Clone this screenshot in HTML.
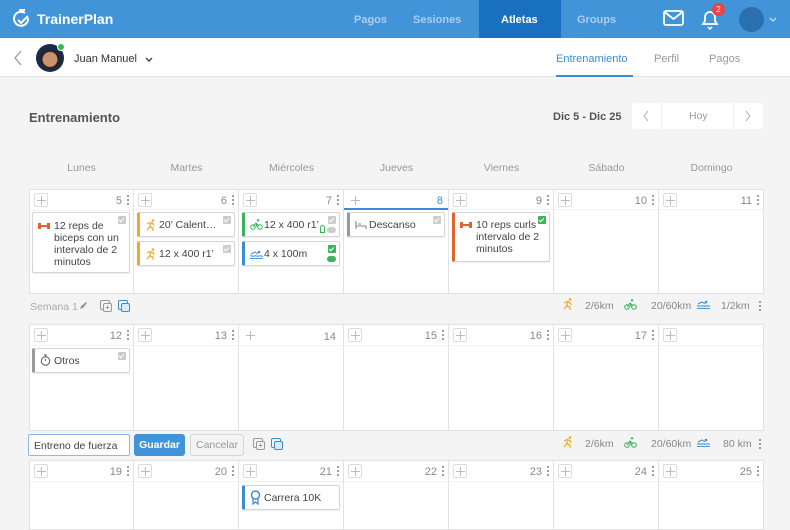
<!DOCTYPE html>
<html><head><meta charset="utf-8">
<style>
*{box-sizing:border-box;margin:0;padding:0}
body{width:790px;height:528px;overflow:hidden;background:#f4f4f4;font-family:"Liberation Sans",sans-serif;position:relative;color:#444}
.a{position:absolute}
.nav{left:0;top:0;width:790px;height:38px;background:#4294d8}
.nt{top:14px;font-size:11px;font-weight:bold;color:#a9cdef}
.cell{position:absolute;background:#fff;border-right:1px solid #e2e2e2;border-bottom:1px solid #e2e2e2}
.plus{position:absolute;left:4px;top:3px;width:14px;height:14px;border:1px solid #ddd;border-radius:2px}
.plus:before{content:"";position:absolute;left:6px;top:2px;width:1px;height:9px;background:#bbb}
.plus:after{content:"";position:absolute;left:2px;top:6px;width:9px;height:1px;background:#bbb}
.num{position:absolute;right:11px;top:5px;font-size:11px;color:#888}
.keb{position:absolute;right:4px;top:4px;width:2px;height:11px;background:radial-gradient(circle,#888 0.9px,transparent 1.1px) 0 0/2px 4px repeat-y}
.hl{position:absolute;left:0;right:0;top:20px;height:1px;background:#f0f0f0}
.card{position:absolute;background:#fff;border:1px solid #d6d6d6;border-radius:2px;box-shadow:0 1px 1px rgba(0,0,0,.08);font-size:10.5px;color:#444;line-height:12px}
.card .t{position:absolute;left:21px;top:6px}
.chk{position:absolute;right:3px;top:3px;width:8px;height:8px;background:#ccc;border-radius:1px}
.chk.g{background:#3cb35a}
.chk:after{content:"";position:absolute;left:2px;top:1px;width:2px;height:4px;border:solid #fff;border-width:0 1px 1px 0;transform:rotate(45deg)}
.ic{position:absolute;left:5px;top:6px}
.day{top:162px;font-size:10.5px;color:#999;width:105px;text-align:center}
.sum{font-size:10.5px;color:#888}
</style></head><body>
<div class="a nav"></div>
<svg class="a" style="left:12px;top:8px" width="20" height="22" viewBox="0 0 20 22"><path d="M7 2h6M10 2v3" stroke="#fff" stroke-width="2" fill="none"/><path d="M16 10a7 7 0 1 1-3-5" stroke="#fff" stroke-width="2" fill="none"/><path d="M6 12l3 3 7-7" stroke="#fff" stroke-width="2" fill="none"/></svg>
<div class="a" style="left:37px;top:11px;font-size:14px;font-weight:bold;color:#fff">TrainerPlan</div>
<div class="a nt" style="left:354px">Pagos</div>
<div class="a nt" style="left:413px">Sesiones</div>
<div class="a" style="left:479px;top:0;width:82px;height:38px;background:#1a70c0"></div>
<div class="a nt" style="left:501px;color:#fff">Atletas</div>
<div class="a nt" style="left:577px">Groups</div>
<svg class="a" style="left:663px;top:10px" width="21" height="16" viewBox="0 0 21 16"><rect x="1" y="1" width="19" height="14" rx="2" stroke="#fff" stroke-width="1.8" fill="none"/><path d="M1.5 2l9 7 9-7" stroke="#fff" stroke-width="1.8" fill="none"/></svg>
<svg class="a" style="left:700px;top:8px" width="20" height="22" viewBox="0 0 20 22"><path d="M3 16h14l-2-3V9a5 5 0 0 0-10 0v4z" stroke="#fff" stroke-width="1.8" fill="none"/><path d="M8 19l2 2 2-2" stroke="#fff" stroke-width="1.5" fill="none"/></svg>
<div class="a" style="left:712px;top:3px;width:13px;height:13px;border-radius:50%;background:#e84545;color:#fff;font-size:8px;text-align:center;line-height:13px">2</div>
<div class="a" style="left:739px;top:7px;width:25px;height:25px;border-radius:50%;background:#2a6fae"></div>
<svg class="a" style="left:769px;top:17px" width="8" height="5"><path d="M1 1l3 3 3-3" stroke="#cde" stroke-width="1.3" fill="none"/></svg>

<div class="a" style="left:0;top:38px;width:790px;height:39px;background:#fff;border-bottom:1px solid #e4e4e4"></div>
<svg class="a" style="left:13px;top:50px" width="10" height="16"><path d="M8 1L2 8l6 7" stroke="#999" stroke-width="1.3" fill="none"/></svg>
<div class="a" style="left:36px;top:44px;width:28px;height:28px;border-radius:50%;background:radial-gradient(circle at 50% 55%,#c8936e 0 7px,#2b1f1a 8px,#1a2a4a 11px)"></div>
<div class="a" style="left:57px;top:43px;width:8px;height:8px;border-radius:50%;background:#2ec04a;border:1px solid #fff"></div>
<div class="a" style="left:74px;top:53px;font-size:11px;color:#333">Juan Manuel</div>
<svg class="a" style="left:145px;top:57px" width="8" height="5"><path d="M1 1l3 3 3-3" stroke="#444" stroke-width="1.4" fill="none"/></svg>
<div class="a" style="left:556px;top:53px;font-size:11px;color:#3a8cd6">Entrenamiento</div>
<div class="a" style="left:556px;top:75px;width:77px;height:2px;background:#3a8cd6"></div>
<div class="a" style="left:654px;top:53px;font-size:11px;color:#999">Perfil</div>
<div class="a" style="left:709px;top:53px;font-size:11px;color:#999">Pagos</div>

<div class="a" style="left:29px;top:110px;font-size:13px;font-weight:bold;color:#555">Entrenamiento</div>
<div class="a" style="left:553px;top:111px;font-size:11px;font-weight:bold;color:#555">Dic 5 - Dic 25</div>
<div class="a" style="left:632px;top:103px;width:131px;height:26px;background:#fff;border-radius:3px"></div>
<div class="a" style="left:661px;top:103px;width:1px;height:26px;background:#eee"></div>
<div class="a" style="left:733px;top:103px;width:1px;height:26px;background:#eee"></div>
<svg class="a" style="left:642px;top:110px" width="8" height="12"><path d="M6 1L2 6l4 5" stroke="#bbb" stroke-width="1.2" fill="none"/></svg>
<svg class="a" style="left:744px;top:110px" width="8" height="12"><path d="M2 1l4 5-4 5" stroke="#bbb" stroke-width="1.2" fill="none"/></svg>
<div class="a" style="left:689px;top:110px;font-size:10.5px;color:#999">Hoy</div>

<div class="a day" style="left:29px">Lunes</div>
<div class="a day" style="left:134px">Martes</div>
<div class="a day" style="left:239px">Miércoles</div>
<div class="a day" style="left:344px">Jueves</div>
<div class="a day" style="left:449px">Viernes</div>
<div class="a day" style="left:554px">Sábado</div>
<div class="a day" style="left:659px">Domingo</div>

<!-- week 1 -->
<div class="a" style="left:29px;top:189px;width:735px;height:105px;border-left:1px solid #e2e2e2;border-top:1px solid #e2e2e2"></div>
<div class="cell" style="left:29px;top:189px;width:105px;height:105px;border-left:1px solid #e2e2e2;border-top:1px solid #e2e2e2"><div class="plus"></div><div class="num">5</div><div class="keb"></div><div class="hl"></div></div>
<div class="cell" style="left:134px;top:190px;width:105px;height:104px"><div class="plus"></div><div class="num">6</div><div class="keb"></div><div class="hl" style="top:19px"></div></div>
<div class="cell" style="left:239px;top:190px;width:105px;height:104px"><div class="plus"></div><div class="num">7</div><div class="keb"></div><div class="hl" style="top:19px"></div></div>
<div class="cell" style="left:344px;top:190px;width:105px;height:104px"><div class="plus" style="border-color:transparent"></div><div class="num" style="right:5px;color:#3a8cd6">8</div><div class="hl" style="top:18px;height:2px;background:#3a8cd6"></div></div>
<div class="cell" style="left:449px;top:190px;width:105px;height:104px"><div class="plus"></div><div class="num">9</div><div class="keb"></div><div class="hl" style="top:19px"></div></div>
<div class="cell" style="left:554px;top:190px;width:105px;height:104px"><div class="plus"></div><div class="num">10</div><div class="keb"></div><div class="hl" style="top:19px"></div></div>
<div class="cell" style="left:659px;top:190px;width:105px;height:104px"><div class="plus"></div><div class="num">11</div><div class="keb"></div><div class="hl" style="top:19px"></div></div>

<div class="card" style="left:32px;top:212px;width:98px;height:61px"><svg class="ic" style="top:9px" width="12" height="8"><rect x="0" y="1" width="3" height="6" fill="#e0642c"/><rect x="9" y="1" width="3" height="6" fill="#e0642c"/><rect x="3" y="3" width="6" height="2" fill="#e0642c"/></svg><div class="t" style="top:7px">12 reps de<br>biceps con un<br>intervalo de 2<br>minutos</div><div class="chk"></div></div>

<div class="card" style="left:137px;top:212px;width:98px;height:25px;border-left:3px solid #f0a830"><svg class="ic" width="12" height="12" viewBox="0 0 12 12"><circle cx="8" cy="1.5" r="1.3" fill="#f0a830"/><path d="M2 5l3-1.5 3 1 1 2.5M6 4l-1.5 4L2 11M5 8l3 1 0 3" stroke="#f0a830" stroke-width="1.2" fill="none"/></svg><div class="t" style="left:19px">20’ Calent…</div><div class="chk"></div></div>
<div class="card" style="left:137px;top:241px;width:98px;height:25px;border-left:3px solid #f0a830"><svg class="ic" width="12" height="12" viewBox="0 0 12 12"><circle cx="8" cy="1.5" r="1.3" fill="#f0a830"/><path d="M2 5l3-1.5 3 1 1 2.5M6 4l-1.5 4L2 11M5 8l3 1 0 3" stroke="#f0a830" stroke-width="1.2" fill="none"/></svg><div class="t" style="left:19px">12 x 400 r1’</div><div class="chk"></div></div>

<div class="card" style="left:242px;top:212px;width:98px;height:25px;border-left:3px solid #3cb35a"><svg class="ic" width="13" height="11" viewBox="0 0 13 11"><circle cx="3" cy="8" r="2.3" stroke="#3cb35a" fill="none"/><circle cx="10" cy="8" r="2.3" stroke="#3cb35a" fill="none"/><circle cx="8" cy="1.3" r="1.2" fill="#3cb35a"/><path d="M3 8l3-4 2 2h2M6 4l1 4" stroke="#3cb35a" fill="none"/></svg><div class="t" style="left:19px">12 x 400 r1’</div><div class="chk"></div><div class="a" style="right:3px;top:14px;width:9px;height:6px;border-radius:4px;background:#ccc"></div><div class="a" style="right:14px;top:12px;width:5px;height:8px;border:1.5px solid #3cb35a;border-radius:3px 3px 0 0"></div></div>
<div class="card" style="left:242px;top:241px;width:98px;height:25px;border-left:3px solid #3a8cd6"><svg class="ic" style="top:8px" width="13" height="9" viewBox="0 0 13 9"><circle cx="9" cy="2" r="1.3" fill="#3a8cd6"/><path d="M1 4l4-2 3 2M0 6c2-1 3 1 4.5 0s3 1 4.5 0 3 1 4 0M0 8.5c2-1 3 1 4.5 0s3 1 4.5 0 3 1 4 0" stroke="#3a8cd6" fill="none"/></svg><div class="t" style="left:19px">4 x 100m</div><div class="chk g"></div><div class="a" style="right:3px;top:14px;width:9px;height:6px;border-radius:4px;background:#3cb35a"></div></div>

<div class="card" style="left:347px;top:212px;width:98px;height:25px;border-left:3px solid #999"><svg class="ic" style="top:7px" width="12" height="10"><path d="M1 1v8M1 6h10v3M3 4h3" stroke="#888" stroke-width="1.1" fill="none"/></svg><div class="t" style="left:19px">Descanso</div><div class="chk"></div></div>

<div class="card" style="left:452px;top:212px;width:98px;height:50px;border-left:3px solid #e0642c"><svg class="ic" style="top:8px" width="12" height="8"><rect x="0" y="1" width="3" height="6" fill="#e0642c"/><rect x="9" y="1" width="3" height="6" fill="#e0642c"/><rect x="3" y="3" width="6" height="2" fill="#e0642c"/></svg><div class="t">10 reps curls<br>intervalo de 2<br>minutos</div><div class="chk g"></div></div>

<!-- bar 1 -->
<div class="a sum" style="left:30px;top:301px;color:#aaa">Semana 1</div>
<svg class="a" style="left:79px;top:301px" width="9" height="9"><path d="M1 8l1-3 5-4 1 1-4 5z" fill="#999"/></svg>
<div class="a" style="left:100px;top:300px;width:10px;height:10px;border:1px solid #999;border-radius:2px"></div><div class="a" style="left:103px;top:303px;width:9px;height:9px;border:1px solid #999;background:#f4f4f4;border-radius:2px;font-size:8px;line-height:7px;text-align:center;color:#777">+</div>
<div class="a" style="left:118px;top:300px;width:10px;height:10px;border:1px solid #3a8cd6;border-radius:2px"></div><div class="a" style="left:121px;top:303px;width:9px;height:9px;border:1.5px solid #3a8cd6;background:#dcebfa;border-radius:2px"></div>
<svg class="a" style="left:562px;top:298px" width="12" height="12" viewBox="0 0 12 12"><circle cx="8" cy="1.5" r="1.3" fill="#f0a830"/><path d="M2 5l3-1.5 3 1 1 2.5M6 4l-1.5 4L2 11M5 8l3 1 0 3" stroke="#f0a830" stroke-width="1.2" fill="none"/></svg>
<div class="a sum" style="left:585px;top:300px">2/6km</div>
<svg class="a" style="left:624px;top:299px" width="13" height="11" viewBox="0 0 13 11"><circle cx="3" cy="8" r="2.3" stroke="#3cb35a" fill="none"/><circle cx="10" cy="8" r="2.3" stroke="#3cb35a" fill="none"/><circle cx="8" cy="1.3" r="1.2" fill="#3cb35a"/><path d="M3 8l3-4 2 2h2M6 4l1 4" stroke="#3cb35a" fill="none"/></svg>
<div class="a sum" style="left:651px;top:300px">20/60km</div>
<svg class="a" style="left:697px;top:300px" width="13" height="9" viewBox="0 0 13 9"><circle cx="9" cy="2" r="1.3" fill="#3a8cd6"/><path d="M1 4l4-2 3 2M0 6c2-1 3 1 4.5 0s3 1 4.5 0 3 1 4 0M0 8.5c2-1 3 1 4.5 0s3 1 4.5 0 3 1 4 0" stroke="#3a8cd6" fill="none"/></svg>
<div class="a sum" style="left:721px;top:300px">1/2km</div>
<div class="a keb" style="left:759px;top:300px;position:absolute"></div>

<!-- week 2 -->
<div class="cell" style="left:29px;top:324px;width:105px;height:107px;border-left:1px solid #e2e2e2;border-top:1px solid #e2e2e2"><div class="plus"></div><div class="num">12</div><div class="keb"></div><div class="hl"></div></div>
<div class="cell" style="left:134px;top:324px;width:105px;height:107px;border-top:1px solid #e2e2e2"><div class="plus"></div><div class="num">13</div><div class="keb"></div><div class="hl"></div></div>
<div class="cell" style="left:239px;top:324px;width:105px;height:107px;border-top:1px solid #e2e2e2"><div class="plus" style="border-color:transparent"></div><div class="num" style="right:7px;top:6px">14</div><div class="hl"></div></div>
<div class="cell" style="left:344px;top:324px;width:105px;height:107px;border-top:1px solid #e2e2e2"><div class="plus"></div><div class="num">15</div><div class="keb"></div><div class="hl"></div></div>
<div class="cell" style="left:449px;top:324px;width:105px;height:107px;border-top:1px solid #e2e2e2"><div class="plus"></div><div class="num">16</div><div class="keb"></div><div class="hl"></div></div>
<div class="cell" style="left:554px;top:324px;width:105px;height:107px;border-top:1px solid #e2e2e2"><div class="plus"></div><div class="num">17</div><div class="keb"></div><div class="hl"></div></div>
<div class="cell" style="left:659px;top:324px;width:105px;height:107px;border-top:1px solid #e2e2e2"><div class="plus"></div><div class="hl"></div></div>
<div class="card" style="left:32px;top:348px;width:98px;height:25px;border-left:3px solid #999"><svg class="ic" style="top:5px" width="11" height="12" viewBox="0 0 11 12"><circle cx="5.5" cy="7" r="4.2" stroke="#666" stroke-width="1.1" fill="none"/><path d="M4 1h3M5.5 1v2M5.5 7V5" stroke="#666" stroke-width="1.1"/></svg><div class="t" style="left:19px">Otros</div><div class="chk"></div></div>

<!-- bar 2 -->
<div class="a" style="left:28px;top:434px;width:102px;height:22px;background:#fff;border:1px solid #8db9e6;border-radius:2px;font-size:10.5px;color:#444;padding:5px 0 0 5px">Entreno de fuerza</div>
<div class="a" style="left:134px;top:434px;width:51px;height:22px;background:#4294d8;border-radius:3px;color:#fff;font-size:10.5px;font-weight:bold;text-align:center;line-height:22px">Guardar</div>
<div class="a" style="left:190px;top:434px;width:54px;height:22px;background:#f4f4f4;border:1px solid #d6d6d6;border-radius:3px;color:#999;font-size:10.5px;text-align:center;line-height:20px">Cancelar</div>
<div class="a" style="left:253px;top:438px;width:10px;height:10px;border:1px solid #999;border-radius:2px"></div><div class="a" style="left:256px;top:441px;width:9px;height:9px;border:1px solid #999;background:#f4f4f4;border-radius:2px;font-size:8px;line-height:7px;text-align:center;color:#777">+</div>
<div class="a" style="left:271px;top:438px;width:10px;height:10px;border:1px solid #3a8cd6;border-radius:2px"></div><div class="a" style="left:274px;top:441px;width:9px;height:9px;border:1.5px solid #3a8cd6;background:#dcebfa;border-radius:2px"></div>
<svg class="a" style="left:562px;top:436px" width="12" height="12" viewBox="0 0 12 12"><circle cx="8" cy="1.5" r="1.3" fill="#f0a830"/><path d="M2 5l3-1.5 3 1 1 2.5M6 4l-1.5 4L2 11M5 8l3 1 0 3" stroke="#f0a830" stroke-width="1.2" fill="none"/></svg>
<div class="a sum" style="left:585px;top:438px">2/6km</div>
<svg class="a" style="left:624px;top:437px" width="13" height="11" viewBox="0 0 13 11"><circle cx="3" cy="8" r="2.3" stroke="#3cb35a" fill="none"/><circle cx="10" cy="8" r="2.3" stroke="#3cb35a" fill="none"/><circle cx="8" cy="1.3" r="1.2" fill="#3cb35a"/><path d="M3 8l3-4 2 2h2M6 4l1 4" stroke="#3cb35a" fill="none"/></svg>
<div class="a sum" style="left:651px;top:438px">20/60km</div>
<svg class="a" style="left:697px;top:438px" width="13" height="9" viewBox="0 0 13 9"><circle cx="9" cy="2" r="1.3" fill="#3a8cd6"/><path d="M1 4l4-2 3 2M0 6c2-1 3 1 4.5 0s3 1 4.5 0 3 1 4 0M0 8.5c2-1 3 1 4.5 0s3 1 4.5 0 3 1 4 0" stroke="#3a8cd6" fill="none"/></svg>
<div class="a sum" style="left:723px;top:438px">80 km</div>
<div class="a keb" style="left:759px;top:438px;position:absolute"></div>

<!-- week 3 -->
<div class="cell" style="left:29px;top:460px;width:105px;height:70px;border-left:1px solid #e2e2e2;border-top:1px solid #e2e2e2"><div class="plus"></div><div class="num">19</div><div class="keb"></div><div class="hl"></div></div>
<div class="cell" style="left:134px;top:460px;width:105px;height:70px;border-top:1px solid #e2e2e2"><div class="plus"></div><div class="num">20</div><div class="keb"></div><div class="hl"></div></div>
<div class="cell" style="left:239px;top:460px;width:105px;height:70px;border-top:1px solid #e2e2e2"><div class="plus"></div><div class="num">21</div><div class="keb"></div><div class="hl"></div></div>
<div class="cell" style="left:344px;top:460px;width:105px;height:70px;border-top:1px solid #e2e2e2"><div class="plus"></div><div class="num">22</div><div class="keb"></div><div class="hl"></div></div>
<div class="cell" style="left:449px;top:460px;width:105px;height:70px;border-top:1px solid #e2e2e2"><div class="plus"></div><div class="num">23</div><div class="keb"></div><div class="hl"></div></div>
<div class="cell" style="left:554px;top:460px;width:105px;height:70px;border-top:1px solid #e2e2e2"><div class="plus"></div><div class="num">24</div><div class="keb"></div><div class="hl"></div></div>
<div class="cell" style="left:659px;top:460px;width:105px;height:70px;border-top:1px solid #e2e2e2"><div class="plus"></div><div class="num">25</div><div class="keb"></div><div class="hl"></div></div>
<div class="card" style="left:242px;top:485px;width:98px;height:25px;border-left:3px solid #3a8cd6"><svg class="ic" style="top:4px" width="11" height="15" viewBox="0 0 11 15"><circle cx="5.5" cy="5" r="4" stroke="#3a8cd6" stroke-width="1.4" fill="none"/><path d="M3 8.5V14l2.5-2 2.5 2V8.5" stroke="#3a8cd6" stroke-width="1.3" fill="none"/></svg><div class="t" style="left:19px">Carrera 10K</div></div>
</body></html>
